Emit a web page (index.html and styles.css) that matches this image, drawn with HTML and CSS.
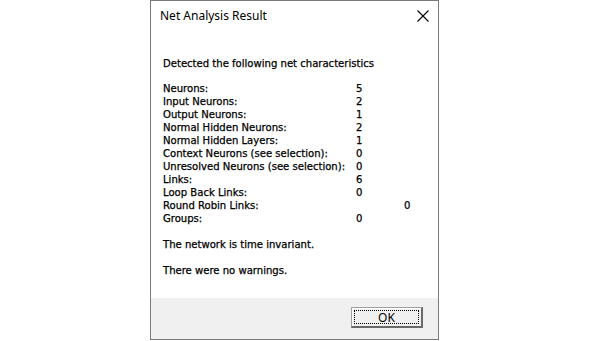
FILE: index.html
```html
<!DOCTYPE html>
<html>
<head>
<meta charset="utf-8">
<link rel="stylesheet" href="styles.css">
</head>
<body>
<div class="page">
  <div class="window">
    <div class="titlebar">
      <span class="title">Net Analysis Result</span>
      <svg class="close" width="12" height="12" viewBox="0 0 12 12"><path d="M0.5 0.5 L11.5 11.5 M11.5 0.5 L0.5 11.5" stroke="#000" stroke-width="1.1" fill="none"/></svg>
    </div>
    <div class="content">
      <div class="heading">Detected the following net characteristics</div>
      <div class="stats">
        <span>Neurons:</span><span class="v">5</span>
        <span>Input Neurons:</span><span class="v">2</span>
        <span>Output Neurons:</span><span class="v">1</span>
        <span>Normal Hidden Neurons:</span><span class="v">2</span>
        <span>Normal Hidden Layers:</span><span class="v">1</span>
        <span>Context Neurons (see selection):</span><span class="v">0</span>
        <span>Unresolved Neurons (see selection):</span><span class="v">0</span>
        <span>Links:</span><span class="v">6</span>
        <span>Loop Back Links:</span><span class="v">0</span>
        <span>Round Robin Links:</span><span class="v far">0</span>
        <span>Groups:</span><span class="v">0</span>
      </div>
      <div class="msg">The network is time invariant.</div>
      <div class="msg">There were no warnings.</div>
    </div>
    <div class="footer">
      <button class="ok"><span class="focus">OK</span></button>
    </div>
  </div>
</div>
</body>
</html>
```
FILE: styles.css
```css
html, body {
  margin: 0;
  padding: 0;
  background: #ffffff;
}
.page {
  display: flex;
  padding-left: 150px;
}
.window {
  width: 287px;
  height: 338px;
  border: 1px solid #7a7a7a;
  display: flex;
  flex-direction: column;
  background: #ffffff;
  font-family: "DejaVu Sans Condensed", "DejaVu Sans", sans-serif;
}
.titlebar {
  height: 31px;
  display: flex;
  align-items: center;
  justify-content: space-between;
  padding: 0 8px 2px 9px;
  box-sizing: border-box;
}
.title {
  font-family: "Noto Sans", "Open Sans", sans-serif;
  font-size: 12px;
  color: #000;
}
.close {
  margin-right: 1px;
}
.content {
  flex: 1;
  padding: 25px 0 0 12px;
  font-size: 11.2px;
  color: #000;
  line-height: 13px;
  -webkit-text-stroke: 0.25px #000;
}
.heading {
  margin-bottom: 12px;
}
.stats {
  display: grid;
  grid-template-columns: 193px 48px auto;
  margin-bottom: 13px;
  white-space: nowrap;
}
.stats span:nth-child(odd) {
  grid-column: 1;
}
.stats .v {
  grid-column: 2;
}
.stats .v.far {
  grid-column: 3;
}
.msg {
  margin-bottom: 13px;
}
.footer {
  height: 41px;
  background: #f0f0f0;
  display: flex;
  justify-content: flex-end;
  align-items: flex-start;
  padding: 9px 15px 0 0;
  box-sizing: border-box;
}
.ok {
  width: 72px;
  height: 21px;
  padding: 2px;
  margin: 0;
  background: #f0f0f0;
  border-style: solid;
  border-width: 1px 2px 2px 1px;
  border-color: #a0a0a0 #696969 #696969 #a0a0a0;
  box-shadow: inset 1px 1px 0 #ffffff;
  display: flex;
}
.focus {
  flex: 1;
  border: 1px dotted #000;
  display: flex;
  align-items: center;
  justify-content: center;
  font-family: "Noto Sans", "Open Sans", sans-serif;
  font-size: 12px;
  color: #000;
}
```
